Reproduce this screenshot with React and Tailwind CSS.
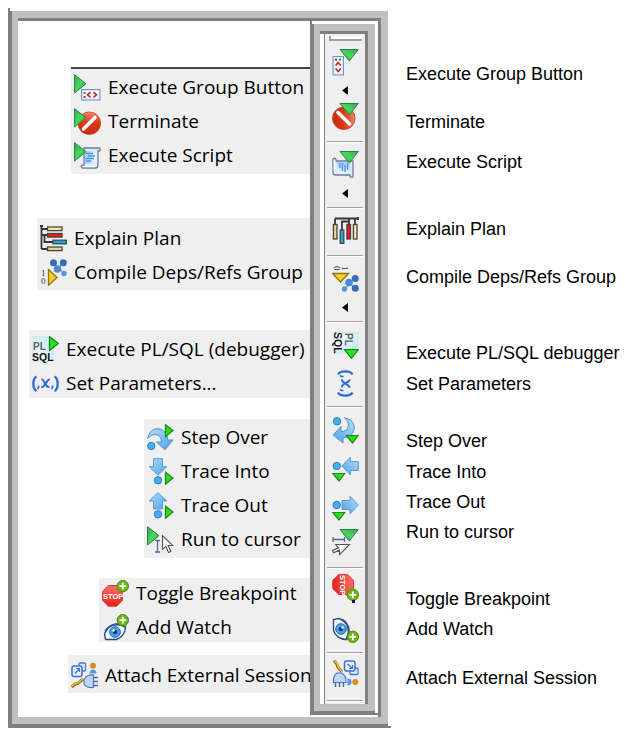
import React from "react";

function Icon({ children, rotated = false }) {
  return (
    <svg
      viewBox="0 0 27 27"
      aria-hidden="true"
      className={rotated ? "block size-[27px] shrink-0 rotate-90" : "block size-[27px] shrink-0"}
    >
      {children}
    </svg>
  );
}

const BigPlay = () => (
  <path d="M.5.7 12 9.7.5 19Z" fill="url(#green)" stroke="#2e8048" strokeWidth="1" />
);

const SmallPlay = ({ y }) => (
  <path
    d="M18.5.7 26 6.5 18.5 12.7Z"
    transform={`translate(0 ${y})`}
    fill="#2bdc22"
    stroke="#1d8a1c"
    strokeWidth="1.2"
  />
);

const Plus = () => (
  <g>
    <circle cx="20.8" cy="6.2" r="5.7" fill="#6cb512" stroke="#4c8a0c" />
    <path d="M20.8 2.8v6.8M17.4 6.2h6.8" stroke="#fff" strokeWidth="1.8" />
  </g>
);

const icons = {
  group: (
    <>
      <rect x="7.5" y="15.5" width="18.5" height="10.5" fill="#d4e6f8" stroke="#6d97c4" />
      <rect x="9" y="17" width="15.5" height="7.5" fill="#f4f8fd" />
      <rect x="9.6" y="18" width="2" height="2" fill="#21933d" />
      <rect x="9.6" y="22" width="2" height="2" fill="#c42626" />
      <path d="m16.5 18.2-3 2.6 3 2.6M19.5 18.2l3 2.6-3 2.6" fill="none" stroke="#c42626" strokeWidth="1.6" />
      <BigPlay />
    </>
  ),
  terminate: (
    <>
      <circle cx="15.3" cy="15.2" r="11.3" fill="url(#red)" stroke="#c9391d" strokeWidth=".7" />
      <path d="M9.5 21 21 9.5" stroke="#fff" strokeWidth="3.6" strokeLinecap="round" />
      <BigPlay />
    </>
  ),
  script: (
    <>
      <path
        d="M10 6h15.5c1 0 1 2.8-.2 3H24v14c0 2-1 3-2.5 3H8.5C7 26 6.7 23.2 8.5 23H10Z"
        fill="#d9ebff"
        stroke="#6e7d94"
        strokeWidth="1.3"
      />
      <path d="M11 9h11.5v13H11z" fill="url(#paper)" />
      <path d="M9 24.5h12" stroke="#fff" strokeWidth="1.5" />
      <path d="M12 11.5h7M14 14h7M12 16.5h8M12 19h5" stroke="#4b93ea" strokeWidth="1.3" />
      <BigPlay />
    </>
  ),
  explain: (
    <>
      <path d="M0 1h3M1.5 1v23M1.5 4H8M1.5 10H8M4.5 10v7H13M1.5 24H8" fill="none" stroke="#3b3434" strokeWidth="1.8" />
      <g stroke="#474343" strokeWidth="1.3">
        <rect x="7.5" y="2" width="14.5" height="3.6" fill="#f3eba0" />
        <rect x="7.5" y="8.5" width="14.5" height="3.6" fill="#f31818" />
        <rect x="13" y="15.2" width="13.3" height="3.6" fill="#18aee0" />
        <rect x="7.5" y="22" width="14.5" height="3.6" fill="#e3d991" />
      </g>
    </>
  ),
  compile: (
    <>
      <path d="m13.5 4 11 11M23.5 4l-8 8" stroke="#84aedb" strokeWidth="1.5" />
      <g fill="#356fb5">
        <circle cx="13.5" cy="3.7" r="3.5" />
        <circle cx="23.3" cy="3.7" r="3.5" />
        <circle cx="17.5" cy="10" r="3.8" fill="#4d8bd0" />
        <circle cx="24" cy="14.5" r="2.7" fill="#5595d8" />
      </g>
      <path d="M8.5 10.5 17 18.5 8.5 26.3Z" fill="#fbd01c" stroke="#8d7420" strokeWidth="1.3" />
      <text x="1" y="17" fontSize="9" fill="#333" className="font-['Liberation_Serif',serif]">1</text>
      <text x="1" y="25" fontSize="9" fill="#333" className="font-['Liberation_Serif',serif]">0</text>
    </>
  ),
  plsql: (
    <>
      <rect x="1" y="1" width="20" height="24" fill="url(#glass)" stroke="#b9dce2" strokeWidth=".7" />
      <text x="1" y="14" fontSize="10" fontWeight="700" fill="#5b6264" className="font-['Liberation_Sans',sans-serif]">PL</text>
      <text x="0" y="25" fontSize="10.5" fontWeight="700" fill="#111" className="font-['Liberation_Sans',sans-serif]">SQL</text>
      <path d="M17.5.7 26.3 7.5 17.5 14.5Z" fill="#18ed18" stroke="#177c22" strokeWidth="1.2" />
    </>
  ),
  params: (
    <>
      <path d="M4.5 6.5C.3 8.500.3 19 4.500 21M22.500 6.500c4.200 2 4.200 12.500 0 14.500" fill="none" stroke="#2d6bd8" strokeWidth="2.300" />
      <path d="M9.500 9.500c3-1 3.500 8.500 8 7.500M17.800 9.500c-3-.5-5 8.500-8.500 7.500" fill="none" stroke="#2d6bd8" strokeWidth="2" />
      <path d="M6.500 15.500v2l-1 1.500M20.500 15.500v2l-1 1.500" fill="none" stroke="#2d6bd8" strokeWidth="1.600" />
    </>
  ),
  over: (
    <>
      <path
        d="M.8 14.500C2 5.500 10 2.500 16 6.500c3 2 4.700 5.500 4.700 9.500h5.300l-8 9.800L9.500 18h5c0-4-1.500-6.500-5-7.200-3.500-.6-6.500.7-8.700 3.700Z"
        fill="url(#blue)"
        stroke="#5093cf"
      />
      <circle cx="4.300" cy="22" r="3.700" fill="#45aef2" stroke="#2e7ec0" />
      <SmallPlay y={0} />
    </>
  ),
  into: (
    <>
      <path d="M6.500.7h9v8h4.300L11 17.200 2.200 8.700h4.300Z" fill="url(#blue)" stroke="#5c9ad0" />
      <circle cx="11" cy="22.300" r="3.700" fill="#45aef2" stroke="#2e7ec0" />
      <SmallPlay y={13.500} />
    </>
  ),
  out: (
    <>
      <path d="M11 .7 19.800 9h-4.300v8h-9V9H2.200Z" fill="url(#blue)" stroke="#5c9ad0" />
      <circle cx="11" cy="22.300" r="3.700" fill="#45aef2" stroke="#2e7ec0" />
      <SmallPlay y={13.500} />
    </>
  ),
  cursor: (
    <>
      <BigPlay />
      <path d="M8 14.500h5M10.500 14.500v11.500M8 26h5" stroke="#4c6d8c" strokeWidth="1.300" />
      <path d="M15.500 9.500v13.800l3.300-3 2.700 6.200 2.300-1-2.600-6h4.500Z" fill="#fafafa" stroke="#555" strokeWidth="1.100" />
    </>
  ),
  stop: (
    <>
      <path d="M6.300 5.500h8.400l5.800 6v8.700l-5.800 6H6.300l-5.800-6v-8.700Z" fill="url(#stopred)" stroke="#df3a32" />
      <text x="1" y="18.700" fontSize="7.500" fontWeight="700" fill="#fff" className="font-['Liberation_Sans',sans-serif]">STOP</text>
      <Plus />
    </>
  ),
  watch: (
    <>
      <path d="M2.500 20C6 11 14 8.500 23.500 13c0 6-4 11-9 12.500H3.500Z" fill="#eff7ff" stroke="#294d80" strokeWidth="1.400" />
      <path d="M3 17C8 9.500 16 7.500 24 13" fill="none" stroke="#31588c" strokeWidth="1.500" />
      <circle cx="13" cy="18" r="5.300" fill="#46a3e8" stroke="#1e62ad" />
      <circle cx="13" cy="18" r="2.300" fill="#123b74" />
      <circle cx="11.500" cy="16.500" r="1.200" fill="#fff" />
      <Plus />
    </>
  ),
  attach: (
    <>
      <rect x="8" y="1" width="6.500" height="8" rx="1" fill="#dce8ff" stroke="#4976d6" strokeWidth="1.300" />
      <rect x="1" y="4" width="10" height="10.500" rx="2" fill="#e8f0ff" stroke="#3f6ed4" strokeWidth="1.500" />
      <path d="m4 11.500 4.500-5M5 6.500h3.500V10" fill="none" stroke="#3f6ed4" strokeWidth="1.200" />
      <path d="m.5 25 4-3.200 2-.2L12 17" fill="none" stroke="#97721f" strokeWidth="3" />
      <path d="m.5 24.500 4-3.200 2-.2 5.500-4.400" fill="none" stroke="#e8b736" strokeWidth="1.500" />
      <circle cx="22" cy="3.700" r="3" fill="#d98b2f" />
      <path d="M18.500 11.500c0-5.500 7-5.500 7 0Z" fill="#4d9be2" />
      <path d="M22.500 13v12.500c-5 .5-8-1-9.500-3.500v-4.500c2-3.500 5-5 9.500-4.500Z" fill="#bed4f8" stroke="#5675b7" strokeWidth="1.200" />
      <path d="M22.500 15.500H27M22.500 19.500H27M22.500 23.500H27" stroke="#4a66a5" strokeWidth="1.500" />
    </>
  ),
};

const menus = [
  {
    box: "mt-[46px] w-[239px] border-t-2 border-[#454545] pt-[3px] pb-1",
    items: [["group", "Execute Group Button"], ["terminate", "Terminate"], ["script", "Execute Script"]],
  },
  {
    box: "mt-11 w-[273px] pt-[5px] pb-[3px]",
    items: [["explain", "Explain Plan"], ["compile", "Compile Deps/Refs Group"]],
  },
  {
    box: "mt-10 w-[281px] pt-1",
    items: [["plsql", "Execute PL/SQL (debugger)"], ["params", "Set Parameters..."]],
  },
  {
    box: "mt-[21px] w-[166px] pt-[3px] pb-1",
    items: [["over", "Step Over"], ["into", "Trace Into"], ["out", "Trace Out"], ["cursor", "Run to cursor"]],
  },
  {
    box: "mt-5 w-[211px]",
    items: [["stop", "Toggle Breakpoint"], ["watch", "Add Watch"]],
  },
  {
    box: "mt-[13px] mb-6 w-[242px] pt-[5px] pb-[3px]",
    items: [["attach", "Attach External Session"]],
  },
];

const toolbar = [
  ["group", "mt-2", "Execute Group Button"],
  ["arrow", "mt-[10px]", "Execute Group options"],
  ["terminate", "mt-2", "Terminate"],
  ["line", "mt-[11px]"],
  ["script", "mt-2", "Execute Script"],
  ["arrow", "mt-[11px]", "Execute Script options"],
  ["line", "mt-[9px]"],
  ["explain", "mt-2", "Explain Plan"],
  ["line", "mt-[11px]"],
  ["compile", "mt-2", "Compile Deps/Refs Group"],
  ["arrow", "mt-[11px]", "Compile options"],
  ["line", "mt-[9px]"],
  ["plsql", "mt-[9px]", "Execute PL/SQL debugger"],
  ["params", "mt-[11px]", "Set Parameters"],
  ["line", "mt-[9px]"],
  ["over", "mt-[9px]", "Step Over"],
  ["into", "mt-[11px]", "Trace Into"],
  ["out", "mt-[12px]", "Trace Out"],
  ["cursor", "mt-2", "Run to cursor"],
  ["line", "mt-[11px]"],
  ["stop", "mt-[5px]", "Toggle Breakpoint"],
  ["watch", "mt-[15px]", "Add Watch"],
  ["line", "mt-[9px]"],
  ["attach", "mt-[6px]", "Attach External Session"],
  ["line", "mt-[13px]"],
];

const captions = [
  ["Execute Group Button", "mt-[51px]"],
  ["Terminate", "mt-6"],
  ["Execute Script", "mt-4"],
  ["Explain Plan", "mt-[43px]"],
  ["Compile Deps/Refs Group", "mt-6"],
  ["Execute PL/SQL debugger", "mt-[52px]"],
  ["Set Parameters", "mt-[7px]"],
  ["Step Over", "mt-[33px]"],
  ["Trace Into", "mt-[7px]"],
  ["Trace Out", "mt-[6px]"],
  ["Run to cursor", "mt-[6px]"],
  ["Toggle Breakpoint", "mt-[43px]"],
  ["Add Watch", "mt-[6px]"],
  ["Attach External Session", "mt-[25px]"],
];

function Gradients() {
  return (
    <svg className="absolute size-0" aria-hidden="true">
      <defs>
        <linearGradient id="green" x1="0" y1="0" x2="1" y2="1">
          <stop offset="0" stopColor="#2fa951" />
          <stop offset=".5" stopColor="#4bd660" />
          <stop offset="1" stopColor="#159f2c" />
        </linearGradient>
        <linearGradient id="red" x1="0" y1="0" x2="0" y2="1">
          <stop offset="0" stopColor="#f0866c" />
          <stop offset=".5" stopColor="#dd3515" />
          <stop offset="1" stopColor="#c72c10" />
        </linearGradient>
        <linearGradient id="stopred" x1="0" y1="0" x2="0" y2="1">
          <stop offset="0" stopColor="#f77466" />
          <stop offset="1" stopColor="#e3221e" />
        </linearGradient>
        <linearGradient id="blue" x1="0" y1="0" x2="1" y2="1">
          <stop offset="0" stopColor="#b5dcf8" />
          <stop offset="1" stopColor="#4da3e6" />
        </linearGradient>
        <linearGradient id="paper" x1="0" y1="0" x2="1" y2="0">
          <stop offset="0" stopColor="#9accff" />
          <stop offset="1" stopColor="#eef7ff" />
        </linearGradient>
        <linearGradient id="glass" x1="0" y1="1" x2="1" y2="0">
          <stop offset="0" stopColor="#ffffff" />
          <stop offset="1" stopColor="#bfe6ee" />
        </linearGradient>
      </defs>
    </svg>
  );
}

/* The shadow edges run a little past the top-left and bottom-right corners. */
function Bevel({ className, children }) {
  return (
    <div
      className={`relative border-b-4 border-l-4 border-[#808080] before:absolute before:-top-[3px] before:-left-1 before:h-[3px] before:w-[2px] before:bg-[#808080] after:absolute after:-right-[3px] after:-bottom-1 after:h-[2px] after:w-[3px] after:bg-[#808080] ${className}`}
    >
      <div className="h-full border-[7px] border-l-[6px] border-[#c0c0c0]">
        <div className="h-full border-t-[3px] border-r-[3px] border-[#808080]">{children}</div>
      </div>
    </div>
  );
}

function Toolbar() {
  return (
    <div role="toolbar" aria-label="Execute" className="ml-1 flex w-[41px] flex-col items-center border-l border-[#808080] bg-[#efefef] pb-[2px]">
      <div className="mt-[2px] h-[5px] w-[33px] shrink-0 border-b-2 border-l-2 border-[#a0a0a0] bg-white" />
      {toolbar.map(([kind, gap, label], i) => {
        if (kind === "line") {
          return <hr key={i} className={`h-[2px] w-9 shrink-0 border-t border-b border-t-[#a0a0a0] border-b-white ${gap}`} />;
        }
        if (kind === "arrow") {
          return (
            <button key={i} type="button" aria-label={label} className={`shrink-0 ${gap}`}>
              <svg viewBox="0 0 6 9" className="block h-[9px] w-[6px]" aria-hidden="true">
                <path d="M6 0v9L0 4.500Z" fill="#000" />
              </svg>
            </button>
          );
        }
        return (
          <button key={i} type="button" aria-label={label} className={`relative shrink-0 ${gap}`}>
            <Icon rotated>{icons[kind]}</Icon>
            {kind === "stop" && <span className="absolute right-1 -bottom-[2px] size-[3px] bg-[#10107c]" />}
          </button>
        );
      })}
    </div>
  );
}

export default function App() {
  return (
    <main className="flex items-start bg-white pt-[11px] pb-[7px] pl-2 text-black">
      <Gradients />
      <Bevel className="shrink-0">
        <div className="flex items-start pr-[3px]">
          <div className="flex w-[292px] flex-col items-end">
            {menus.map((menu) => (
              <div key={menu.items[0][0]} className={`flex flex-col gap-1 bg-[#efefef] ${menu.box}`}>
                {menu.items.map(([kind, label]) => (
                  <button
                    key={kind}
                    type="button"
                    className="flex h-[30px] items-center gap-[7px] pl-[3px] text-left font-['Open_Sans','Noto_Sans',sans-serif] text-[19px] whitespace-nowrap"
                  >
                    <Icon>{icons[kind]}</Icon>
                    {label}
                  </button>
                ))}
              </div>
            ))}
          </div>
          <Bevel className="mt-[3px]">
            <Toolbar />
          </Bevel>
        </div>
      </Bevel>
      <ul className="ml-[18px] font-['Liberation_Sans',Arial,sans-serif] text-[18px] leading-6 whitespace-nowrap">
        {captions.map(([label, gap]) => (
          <li key={label} className={gap}>{label}</li>
        ))}
      </ul>
    </main>
  );
}
